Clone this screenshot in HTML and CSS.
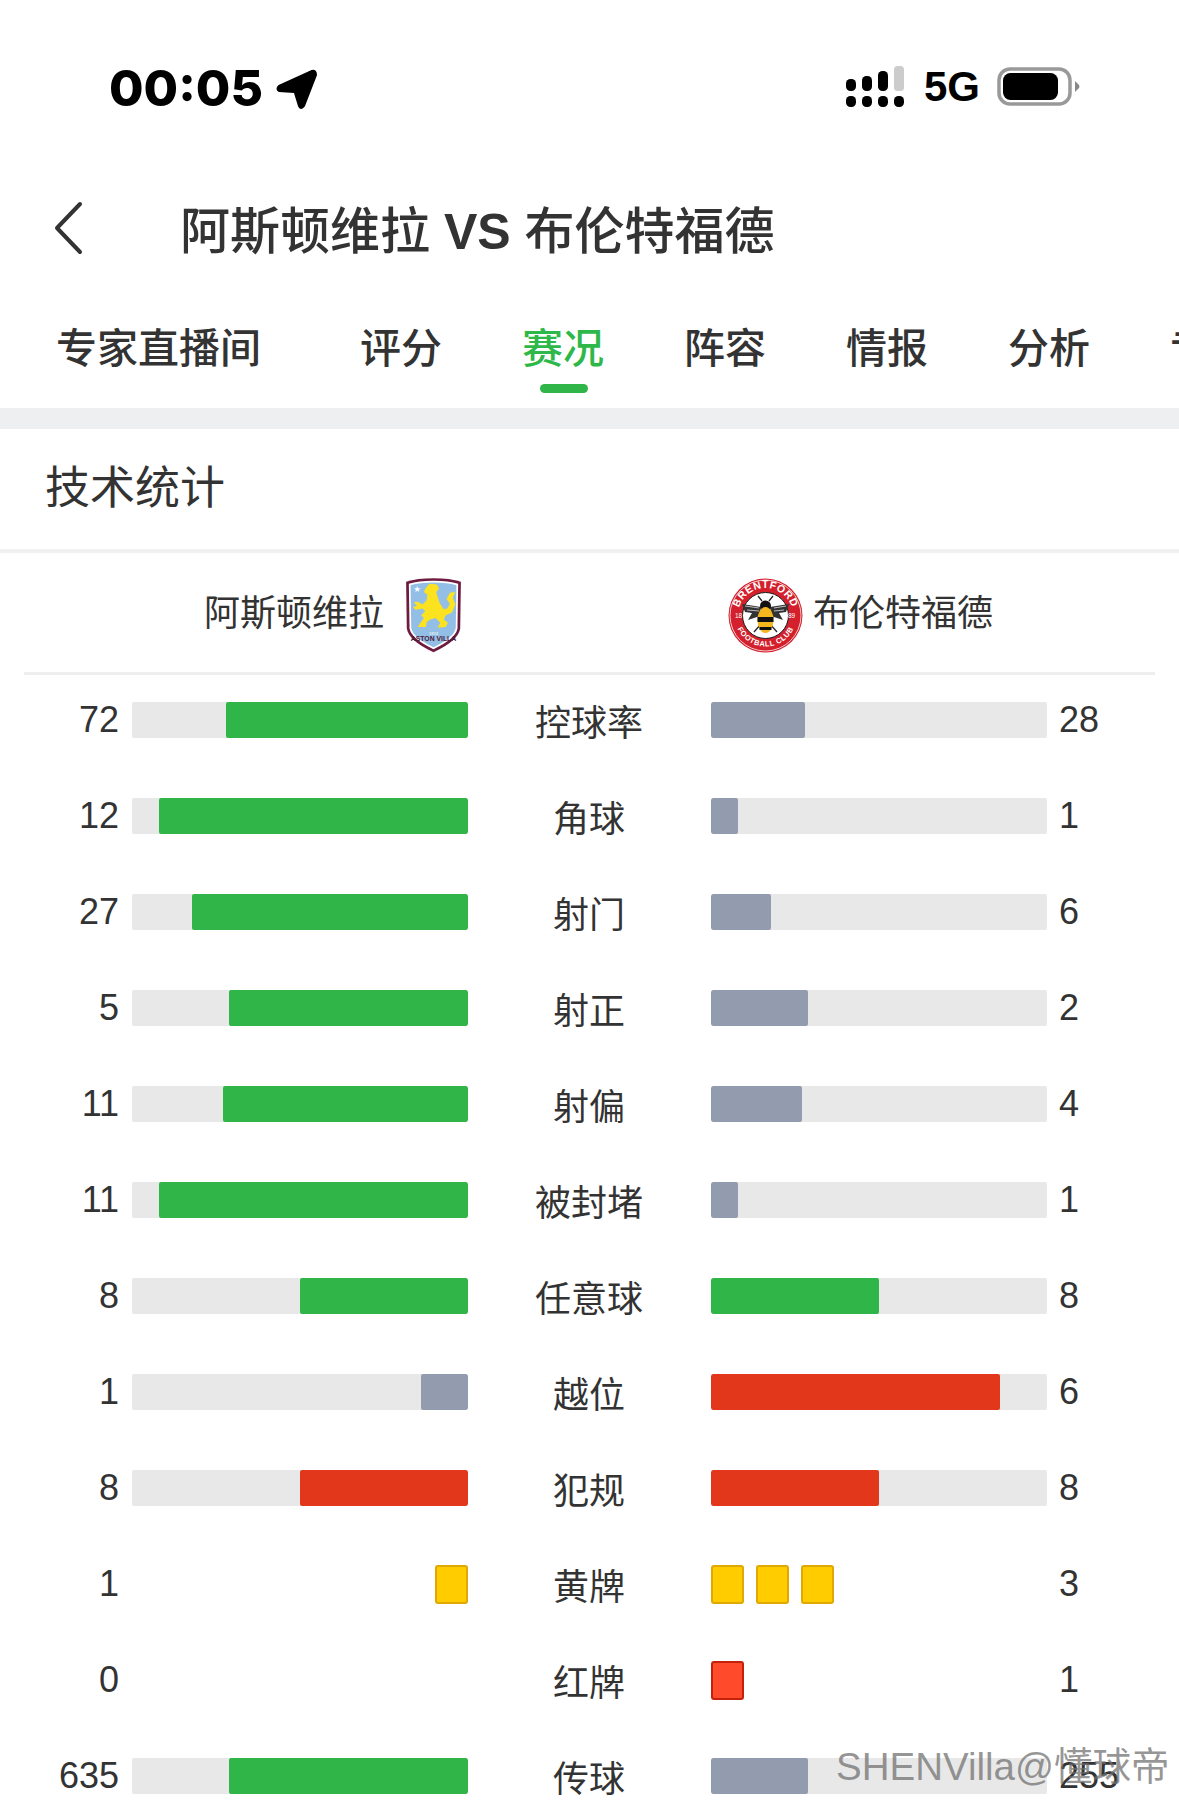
FILE: index.html
```html
<!DOCTYPE html>
<html lang="zh-CN">
<head>
    <meta charset="UTF-8">
    <meta name="viewport" content="width=device-width, initial-scale=1.0">
    <title>阿斯顿维拉 VS 布伦特福德</title>
    <link rel="stylesheet" href="styles.css">
</head>
<body>
    <div class="statusBar">
        <div class="statusLeft">
            <span class="clock">00:05</span>
            <svg class="locationIcon" width="42" height="42" viewBox="0 0 42 42">
                <path d="M37 3 L4 18 Q1 21 4 23 L19 24 Q20 24 20 25 L24 38 Q26 42 29 38 L41 7 Q41 2 37 3 Z" fill="#000" stroke="#000" stroke-width="2" stroke-linejoin="round"/>
            </svg>
        </div>
        <div class="statusRight">
            <svg class="signalIcon" width="58" height="42" viewBox="0 0 58 42">
                <rect x="0" y="30" width="10" height="11" rx="4.5"/>
                <rect x="16" y="30" width="10" height="11" rx="4.5"/>
                <rect x="32" y="30" width="10" height="11" rx="4.5"/>
                <rect x="48" y="30" width="10" height="11" rx="4.5"/>
                <rect x="0" y="13" width="10" height="12" rx="4.5"/>
                <rect x="16" y="10" width="10" height="15" rx="4.5"/>
                <rect x="32" y="5" width="10" height="20" rx="4.5"/>
                <rect x="48" y="0" width="10" height="25" rx="3.5" fill="#ccc"/>
            </svg>
            <span class="network">5G</span>
            <svg class="batteryIcon" width="83" height="40" viewBox="0 0 83 40">
                <rect x="2" y="2" width="71" height="35" rx="11" fill="none" stroke="#999" stroke-width="3.5"/>
                <rect x="6" y="6" width="55" height="27" rx="7.5" fill="#000"/>
                <path d="M78 14 L82 18 Q83 19.5 82 21 L78 25 Z" fill="#888"/>
            </svg>
        </div>
    </div>

    <div class="navBar">
        <svg class="backIcon" width="30" height="54" viewBox="0 0 30 54">
            <path d="M27 3 L4 27 L27 51" fill="none" stroke="#333" stroke-width="4" stroke-linecap="round" stroke-linejoin="round"/>
        </svg>
        <h1 class="matchTitle">阿斯顿维拉 <span class="versus">VS</span> 布伦特福德</h1>
    </div>

    <div class="tabs">
        <div class="tab tabFirst">专家直播间</div>
        <div class="tab">评分</div>
        <div class="tab tabActive">赛况</div>
        <div class="tab">阵容</div>
        <div class="tab">情报</div>
        <div class="tab">分析</div>
        <div class="tab">专家</div>
    </div>

    <div class="sectionTitle">技术统计</div>

    <div class="teams">
        <div class="team teamHome">
            <span class="teamName">阿斯顿维拉</span>
            <svg width="57" height="76" viewBox="0 0 164 222">
                <path d="M82 4 Q130 4 162 14 L160 150 Q156 186 82 220 Q8 186 4 150 L2 14 Q34 4 82 4 Z" fill="#6d1c40"/>
                <path d="M82 11 Q126 11 154 20 L152 150 Q148 180 82 211 Q16 180 12 150 L10 20 Q38 11 82 11 Z" fill="#fff"/>
                <path d="M82 16 Q124 16 149 24 L147 148 Q143 176 82 205 Q21 176 17 148 L15 24 Q40 16 82 16 Z" fill="#93bfe6"/>
                <path d="M58 34 L70 20 L92 22 L98 34 L90 44 L94 58 L100 76 L112 94 L122 92 L130 78 L120 64 L130 46 L146 44 L138 60 L146 80 L136 104 L118 112 L112 124 L124 134 L118 146 L94 148 L102 134 L88 120 L72 124 L62 132 L60 146 L36 146 L44 134 L54 120 L46 112 L58 100 L50 92 L30 96 L22 88 L34 84 L24 74 L36 72 L50 80 L62 68 L64 52 L54 44 Z" fill="#fde21f"/>
                <text class="crestStar" x="24" y="42" fill="#fff">★</text>
                <text class="crestYear" x="82" y="168" text-anchor="middle" fill="#fff">1874</text>
                <text class="crestName" x="82" y="188" text-anchor="middle" fill="#4a1a3a">ASTON VILLA</text>
            </svg>
        </div>
        <div class="team teamAway">
            <svg width="75" height="75" viewBox="0 0 150 150">
                <defs>
                    <path id="ringTop" d="M20 75 A55 55 0 0 1 130 75"/>
                    <path id="ringBottom" d="M13 75 A62 62 0 0 0 137 75"/>
                </defs>
                <circle cx="75" cy="75" r="74" fill="#d3202c"/>
                <circle cx="75" cy="75" r="71" fill="none" stroke="#fff" stroke-width="1.5"/>
                <circle cx="75" cy="75" r="46" fill="#fff" stroke="#1a1a1a" stroke-width="2"/>
                <text class="ringText"><textPath href="#ringTop" startOffset="50%" text-anchor="middle">BRENTFORD</textPath></text>
                <text class="ringText ringTextSmall"><textPath href="#ringBottom" startOffset="50%" text-anchor="middle">FOOTBALL CLUB</textPath></text>
                <text class="ringYear" x="14" y="80">18</text>
                <text class="ringYear" x="120" y="80">89</text>
                <path d="M66 58 L28 52 L34 68 L48 70 L40 84 L64 76 Z" fill="#333"/>
                <path d="M84 58 L122 52 L116 68 L102 70 L110 84 L86 76 Z" fill="#333"/>
                <path d="M34 56 L62 60 M38 64 L62 66 M92 60 L116 56 M92 66 L112 64" stroke="#bbb" stroke-width="2"/>
                <path d="M52 108 L66 92 M98 108 L84 92 M68 46 L60 36 M82 46 L90 36" stroke="#222" stroke-width="2.5"/>
                <circle cx="75" cy="56" r="11" fill="#111"/>
                <ellipse cx="75" cy="84" rx="16" ry="26" fill="#f4b71e"/>
                <path d="M59 78 H91 V88 H59 Z M63 98 H87 V104 H63 Z" fill="#111"/>
            </svg>
            <span class="teamName">布伦特福德</span>
        </div>
    </div>

    <div class="stats">
        <div class="statRow">
            <div class="value valueHome">72</div>
            <div class="track trackHome"><div class="fill green" style="width: 72%"></div></div>
            <div class="label">控球率</div>
            <div class="track"><div class="fill grey" style="width: 28%"></div></div>
            <div class="value">28</div>
        </div>
        <div class="statRow">
            <div class="value valueHome">12</div>
            <div class="track trackHome"><div class="fill green" style="width: 92%"></div></div>
            <div class="label">角球</div>
            <div class="track"><div class="fill grey" style="width: 8%"></div></div>
            <div class="value">1</div>
        </div>
        <div class="statRow">
            <div class="value valueHome">27</div>
            <div class="track trackHome"><div class="fill green" style="width: 82%"></div></div>
            <div class="label">射门</div>
            <div class="track"><div class="fill grey" style="width: 18%"></div></div>
            <div class="value">6</div>
        </div>
        <div class="statRow">
            <div class="value valueHome">5</div>
            <div class="track trackHome"><div class="fill green" style="width: 71%"></div></div>
            <div class="label">射正</div>
            <div class="track"><div class="fill grey" style="width: 29%"></div></div>
            <div class="value">2</div>
        </div>
        <div class="statRow">
            <div class="value valueHome">11</div>
            <div class="track trackHome"><div class="fill green" style="width: 73%"></div></div>
            <div class="label">射偏</div>
            <div class="track"><div class="fill grey" style="width: 27%"></div></div>
            <div class="value">4</div>
        </div>
        <div class="statRow">
            <div class="value valueHome">11</div>
            <div class="track trackHome"><div class="fill green" style="width: 92%"></div></div>
            <div class="label">被封堵</div>
            <div class="track"><div class="fill grey" style="width: 8%"></div></div>
            <div class="value">1</div>
        </div>
        <div class="statRow">
            <div class="value valueHome">8</div>
            <div class="track trackHome"><div class="fill green" style="width: 50%"></div></div>
            <div class="label">任意球</div>
            <div class="track"><div class="fill green" style="width: 50%"></div></div>
            <div class="value">8</div>
        </div>
        <div class="statRow">
            <div class="value valueHome">1</div>
            <div class="track trackHome"><div class="fill grey" style="width: 14%"></div></div>
            <div class="label">越位</div>
            <div class="track"><div class="fill red" style="width: 86%"></div></div>
            <div class="value">6</div>
        </div>
        <div class="statRow">
            <div class="value valueHome">8</div>
            <div class="track trackHome"><div class="fill red" style="width: 50%"></div></div>
            <div class="label">犯规</div>
            <div class="track"><div class="fill red" style="width: 50%"></div></div>
            <div class="value">8</div>
        </div>
        <div class="statRow">
            <div class="value valueHome">1</div>
            <div class="cards cardsHome"><div class="card cardYellow"></div></div>
            <div class="label">黄牌</div>
            <div class="cards"><div class="card cardYellow"></div><div class="card cardYellow"></div><div class="card cardYellow"></div></div>
            <div class="value">3</div>
        </div>
        <div class="statRow">
            <div class="value valueHome">0</div>
            <div class="cards cardsHome"></div>
            <div class="label">红牌</div>
            <div class="cards"><div class="card cardRed"></div></div>
            <div class="value">1</div>
        </div>
        <div class="statRow">
            <div class="value valueHome">635</div>
            <div class="track trackHome"><div class="fill green" style="width: 71%"></div></div>
            <div class="label">传球</div>
            <div class="track"><div class="fill grey" style="width: 29%"></div></div>
            <div class="value">255</div>
        </div>
    </div>

    <div class="watermark">SHENVilla@懂球帝</div>
</body>
</html>
```

FILE: styles.css
```css
html, body {
    height: 1801px;
}

body {
    background-color: #fff;
    color: #333;
    font-family: 'Liberation Sans', 'Noto Sans CJK SC', sans-serif;
    margin: 0;
    overflow: hidden;
    position: relative;
}

.statusBar {
    height: 160px;
    padding: 64px 99px 0 109px;
    box-sizing: border-box;
    display: flex;
    justify-content: space-between;
    align-items: flex-start;
    color: #000;
}

.statusLeft, .statusRight {
    display: flex;
    align-items: center;
}

.statusLeft {
    gap: 12px;
}

.statusRight {
    padding-top: 2px;
}

.clock {
    font-family: 'Inter', sans-serif;
    font-size: 50px;
    font-weight: 800;
    line-height: 48px;
}

.locationIcon {
    margin-top: 2px;
}

.network {
    font-family: 'Liberation Sans', sans-serif;
    font-size: 42px;
    font-weight: 700;
    line-height: 42px;
    margin: 0 17px 0 20px;
}

.navBar {
    height: 140px;
    padding-left: 53px;
    display: flex;
    align-items: center;
}

.backIcon {
    flex: none;
    margin-bottom: 4px;
}

.matchTitle {
    margin: 0 0 6px 97px;
    font-family: 'Liberation Sans', 'Noto Sans CJK SC', sans-serif;
    font-size: 50px;
    font-weight: 500;
    color: #333;
    white-space: nowrap;
}

.versus {
    font-weight: 700;
}

.tabs {
    height: 108px;
    padding: 21px 0 0 56px;
    box-sizing: border-box;
    display: flex;
    gap: 80px;
    overflow: hidden;
    font-size: 41px;
    font-weight: 500;
    line-height: 56px;
    white-space: nowrap;
}

.tab {
    flex: none;
    position: relative;
}

.tabFirst {
    margin-right: 19px;
}

.tabActive {
    color: #2fb84a;
}

.tabActive::after {
    content: "";
    position: absolute;
    left: 18px;
    top: 63px;
    width: 48px;
    height: 9px;
    border-radius: 5px;
    background-color: #2fb548;
}

.sectionTitle {
    height: 120px;
    border-top: 21px solid #eeeff1;
    border-bottom: 4px solid #f1f1f1;
    padding-left: 45px;
    font-size: 45px;
    line-height: 120px;
}

.teams {
    height: 114px;
    padding-top: 5px;
    margin: 0 24px;
    border-bottom: 3px solid #eee;
    display: flex;
    align-items: center;
    font-size: 36px;
}

.team {
    display: flex;
    align-items: center;
}

.teamName {
    margin-bottom: 11px;
}

.teamHome {
    width: 438px;
    justify-content: flex-end;
    gap: 21px;
}

.teamAway {
    margin-left: 266px;
    gap: 10px;
}

.crestStar {
    font-size: 20px;
}

.crestYear {
    font-size: 12px;
    font-family: 'Liberation Sans', sans-serif;
}

.crestName {
    font-size: 20px;
    font-weight: 700;
    font-family: 'Liberation Sans', sans-serif;
}

.ringText {
    fill: #fff;
    font-size: 21px;
    font-weight: 700;
    letter-spacing: 1px;
    font-family: 'Liberation Sans', sans-serif;
}

.ringTextSmall {
    font-size: 15px;
}

.ringYear {
    fill: #fff;
    font-size: 13px;
    font-family: 'Liberation Sans', sans-serif;
}

.stats {
    margin-top: -3px;
    display: flex;
    flex-direction: column;
}

.statRow {
    height: 96px;
    display: grid;
    grid-template-columns: 119px 336px 1fr 336px 132px;
    align-items: center;
    font-size: 36px;
}

.value {
    padding-left: 12px;
    line-height: 36px;
}

.valueHome {
    padding-left: 0;
    text-align: right;
}

.track {
    height: 36px;
    background-color: #e8e8e8;
    border-radius: 2px;
    display: flex;
    overflow: hidden;
}

.trackHome {
    margin-left: 13px;
    margin-right: -13px;
    justify-content: flex-end;
}

.fill {
    height: 100%;
    border-radius: 2px;
}

.green {
    background-color: #2fb548;
}

.grey {
    background-color: #939cae;
}

.red {
    background-color: #e2371b;
}

.label {
    text-align: center;
    line-height: 40px;
    margin-top: 7px;
    padding-left: 12px;
}

.cards {
    height: 39px;
    display: flex;
    gap: 12px;
}

.cardsHome {
    margin-left: 13px;
    margin-right: -13px;
    justify-content: flex-end;
}

.card {
    width: 33px;
    height: 39px;
    box-sizing: border-box;
    border-radius: 3px;
}

.cardYellow {
    background-color: #ffcc00;
    border: 2px solid #e0a800;
}

.cardRed {
    background-color: #ff4a2b;
    border: 2px solid #c32109;
}

.watermark {
    position: absolute;
    left: 836px;
    top: 1743px;
    font-size: 38.5px;
    line-height: 48px;
    color: rgba(110, 110, 110, 0.72);
    white-space: nowrap;
}
```
